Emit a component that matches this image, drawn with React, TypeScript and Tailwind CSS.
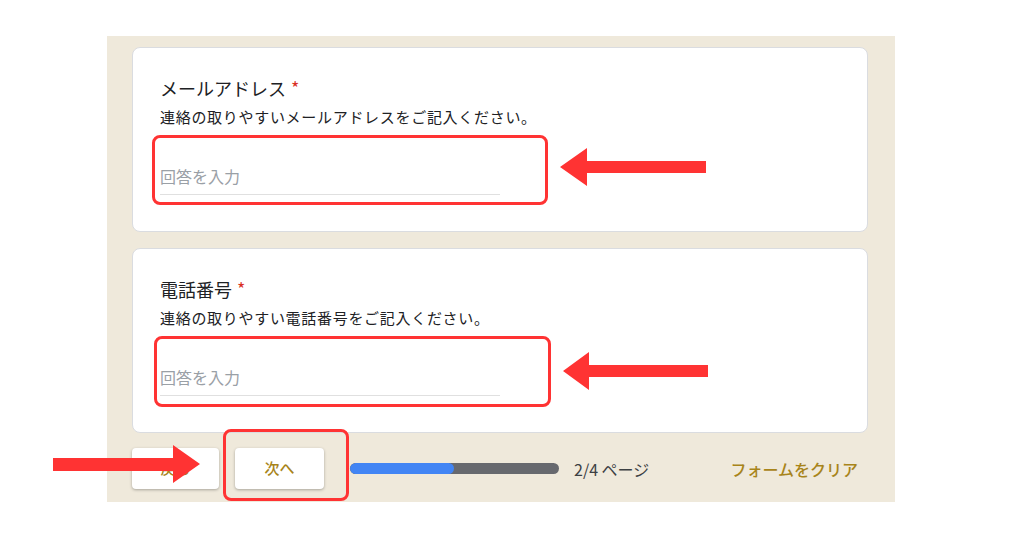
import React from "react";

const jp = { fontFamily: '"Noto Sans CJK JP", "Noto Sans", Roboto, sans-serif' };

function Card({ title, desc }: { title: string; desc: string }) {
  return (
    <div className="w-[736px] h-[185px] bg-white rounded-lg border border-[#dadce0] pt-[28px] pl-[27px]">
      <div className="flex items-start h-6">
        <span className="text-[18px] leading-6 text-[#202124]">{title}</span>
        <span className="relative top-[3px] ml-[5px] text-[18px] leading-4 text-[#d93025]">*</span>
      </div>
      <div className="mt-[7px] text-[15px] leading-5 tracking-[0.7px] text-[#202124]">{desc}</div>
      <div className="mt-[37px] w-[340px] border-b border-[#e0e0e0] pb-[6px]">
        <span className="text-[16px] leading-6 text-[#9aa0a6]">回答を入力</span>
      </div>
    </div>
  );
}

export default function App() {
  return (
    <div className="relative w-[1024px] h-[538px] bg-white overflow-hidden" style={jp}>
      <div className="ml-[107px] mt-[36px] w-[788px] h-[466px] bg-[#efe9db] pt-[11px] pl-[25px]">
        <Card title="メールアドレス" desc="連絡の取りやすいメールアドレスをご記入ください。" />
        <div className="mt-[16px]">
          <Card title="電話番号" desc="連絡の取りやすい電話番号をご記入ください。" />
        </div>
        <div className="mt-[15px] flex items-center w-[736px]">
          <button className="w-[87px] h-[41px] bg-white rounded-[4px] shadow-[0_1px_3px_rgba(0,0,0,0.3)] text-[15px] font-medium text-[#a8841a]">
            戻る
          </button>
          <button className="ml-[16px] w-[89px] h-[41px] bg-white rounded-[4px] shadow-[0_1px_3px_rgba(0,0,0,0.3)] text-[15px] font-medium text-[#a8841a]">
            次へ
          </button>
          <div className="ml-[26px] w-[209px] h-[11px] rounded-full bg-[#67696e] overflow-hidden">
            <div className="w-[104px] h-full bg-[#4285f4] rounded-full" />
          </div>
          <span className="ml-[15px] text-[16px] text-[#3c4043]">2/4 ページ</span>
          <span className="ml-auto mr-[10px] text-[16px] font-medium text-[#a8841a]">フォームをクリア</span>
        </div>
      </div>

      {/* annotation boxes */}
      <div className="absolute left-[152px] top-[135px] w-[396px] h-[70px] border-[3px] border-[#ff3333] rounded-[8px]" />
      <div className="absolute left-[154px] top-[336px] w-[397px] h-[71px] border-[3px] border-[#ff3333] rounded-[8px]" />
      <div className="absolute left-[223px] top-[429px] w-[126px] h-[72px] border-[3px] border-[#ff3333] rounded-[8px]" />

      {/* annotation arrows */}
      <svg className="absolute left-0 top-0" width="1024" height="538" viewBox="0 0 1024 538">
        <polygon fill="#ff3333" points="560,167 587,148 587,161 706,161 706,173 587,173 587,186" />
        <polygon fill="#ff3333" points="563,371 589,352 589,365 708,365 708,377 589,377 589,390" />
        <polygon fill="#ff3333" points="200,464 173,445 173,458 53,458 53,471 173,471 173,483" />
      </svg>
    </div>
  );
}
